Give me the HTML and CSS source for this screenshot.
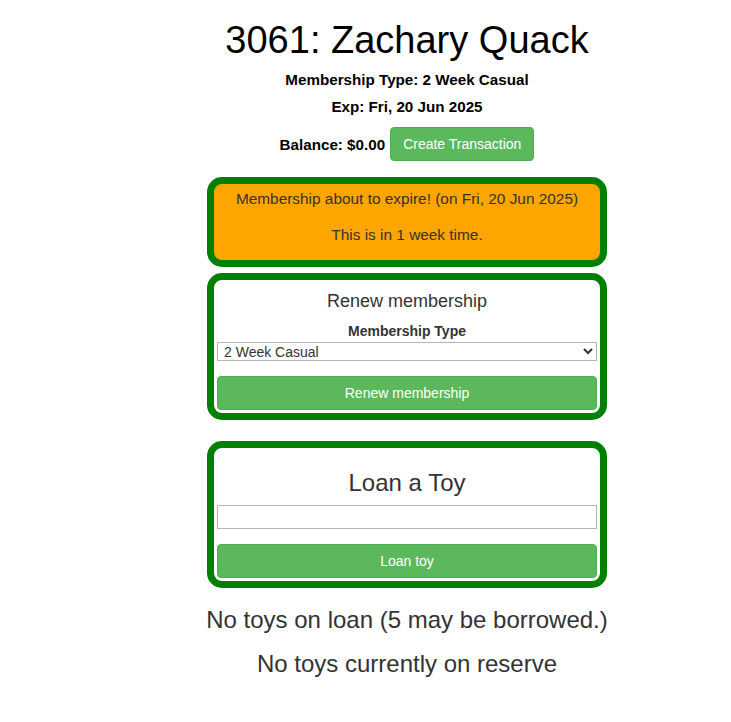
FILE: index.html
```html
<!DOCTYPE html>
<html lang="en">

<head>
    <meta charset="UTF-8">
    <meta name="viewport" content="width=device-width, initial-scale=1.0">
    <title>3061: Zachary Quack</title>
    <link rel="stylesheet" href="styles.css">
</head>

<body>
    <div class="member-page">
        <h1 class="member-name">3061: Zachary Quack</h1>
        <div class="member-meta">Membership Type: 2 Week Casual</div>
        <div class="member-meta">Exp: Fri, 20 Jun 2025</div>
        <div class="balance-row">
            <span class="balance">Balance: $0.00</span>
            <button class="btn btn-success">Create Transaction</button>
        </div>

        <!-- 到期提醒 -->
        <div class="panel panel-warning">
            <p>Membership about to expire! (on Fri, 20 Jun 2025)</p>
            <p>This is in 1 week time.</p>
        </div>

        <!-- 续费 -->
        <div class="panel panel-renew">
            <h3 class="panel-title">Renew membership</h3>
            <label class="field-label" for="membershipType">Membership Type</label>
            <select id="membershipType" class="field-select">
                <option>2 Week Casual</option>
                <option>1 Month</option>
                <option>6 Months</option>
                <option>12 Months</option>
            </select>
            <button class="btn btn-success btn-block">Renew membership</button>
        </div>

        <!-- 借玩具 -->
        <div class="panel panel-loan">
            <h2 class="panel-title-lg">Loan a Toy</h2>
            <input type="text" class="field-input">
            <button class="btn btn-success btn-block">Loan toy</button>
        </div>

        <div class="status-line status-loan">No toys on loan (5 may be borrowed.)</div>
        <div class="status-line status-reserve">No toys currently on reserve</div>
    </div>
</body>

</html>
```

FILE: styles.css
```css
:root {
    --text-color: #333333;
    --panel-border: #008000;
    --warning-background: #ffa500;
    --success-background: #5cb85c;
    --success-border: #4cae4c;
    --field-border: #b5b5b5;
}

html,
body {
    margin: 0;
    background: #ffffff;
}

body {
    font-family: "Liberation Sans", Arial, sans-serif;
    color: var(--text-color);
}

.member-page {
    width: 400px;
    margin-left: 207px;
    text-align: center;
}

.member-name {
    margin: 18px 0 0;
    font-size: 38px;
    line-height: 44px;
    font-weight: normal;
    color: #000000;
}

.member-meta {
    font-size: 15.2px;
    line-height: 27px;
    font-weight: bold;
    color: #000000;
}

.member-name + .member-meta {
    margin-top: 4px;
}

.balance-row {
    display: flex;
    justify-content: center;
    align-items: center;
    gap: 5px;
    margin-top: 7px;
}

.balance {
    font-size: 15.2px;
    font-weight: bold;
    color: #000000;
}

.btn {
    font-family: inherit;
    font-size: 14px;
    line-height: 20px;
    padding: 6px 12px;
    border-radius: 4px;
    border: 1px solid transparent;
    cursor: pointer;
}

.btn-success {
    background-color: var(--success-background);
    border-color: var(--success-border);
    color: #ffffff;
}

.btn-block {
    display: block;
    width: 100%;
    height: 34px;
    margin-top: 15px;
}

.panel {
    box-sizing: border-box;
    width: 400px;
    border: 7px solid var(--panel-border);
    border-radius: 15px;
    padding: 3px;
    background: #ffffff;
}

.panel-warning {
    margin-top: 16px;
    padding: 5px 3px;
    background: var(--warning-background);
}

.panel-warning p {
    margin: 0 0 10px;
    font-size: 15.4px;
    line-height: 20px;
}

.panel-warning p:first-child {
    margin-bottom: 16px;
}

.panel-renew {
    margin-top: 6px;
}

.panel-title {
    margin: 8px 0 10px;
    font-size: 18px;
    line-height: 20px;
    font-weight: normal;
}

.field-label {
    display: block;
    font-size: 14px;
    line-height: 21px;
    font-weight: bold;
}

.field-select {
    display: block;
    box-sizing: border-box;
    width: 100%;
    height: 19px;
    font-family: inherit;
    font-size: 14px;
    color: var(--text-color);
    border: 1px solid var(--field-border);
    border-radius: 0;
    background: #ffffff;
    padding: 0 2px;
}

.panel-loan {
    margin-top: 21px;
}

.panel-title-lg {
    margin: 18px 0 8px;
    font-size: 24px;
    line-height: 28px;
    font-weight: normal;
}

.field-input {
    display: block;
    box-sizing: border-box;
    width: 100%;
    height: 24px;
    border: 1px solid var(--field-border);
    padding: 2px 4px;
    font-family: inherit;
}

.status-line {
    margin-left: -20px;
    margin-right: -20px;
    font-size: 24px;
    line-height: 28px;
}

.status-loan {
    margin-top: 18px;
}

.status-reserve {
    margin-top: 16px;
}
```
